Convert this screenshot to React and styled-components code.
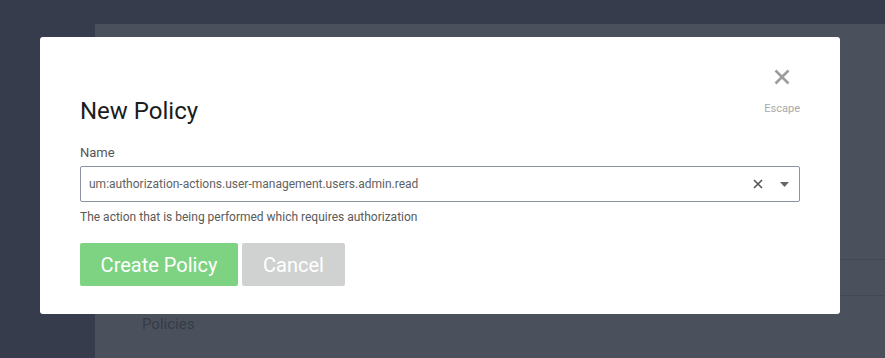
import React from "react";
import styled, { createGlobalStyle } from "styled-components";

const Global = createGlobalStyle`
  html, body { margin: 0; padding: 0; }
  body {
    background: #363c4c;
    font-family: Roboto, "Liberation Sans", sans-serif;
    width: 885px;
    height: 358px;
    overflow: hidden;
  }
`;

const Page = styled.div`
  position: relative;
  width: 885px;
  height: 358px;
  display: grid;
  grid-template-columns: 95px 1fr;
  grid-template-rows: 24px 1fr;
`;

const Content = styled.div`
  grid-column: 2;
  grid-row: 2;
  background: #4b515c;
  display: flex;
  flex-direction: column;
  padding-top: 235px;
`;

const DottedRow = styled.div`
  height: ${(p) => (p.$h != null ? p.$h : 35)}px;
  border-top: 1px dotted #3c424d;
`;

const NavLabel = styled.div`
  padding: 19px 0 0 47px;
  font-size: 15px;
  line-height: 18px;
  color: #353b47;
`;

const Modal = styled.div`
  position: absolute;
  left: 40px;
  top: 37px;
  width: 800px;
  height: 277px;
  box-sizing: border-box;
  background: #fff;
  border-radius: 3px;
  padding: 29px 40px 0 40px;
`;

const Header = styled.div`
  display: flex;
  justify-content: space-between;
  align-items: flex-start;
`;

const Title = styled.h2`
  margin: 30px 0 0 0;
  font-size: 24px;
  font-weight: 400;
  color: #1c1c1c;
  line-height: 30px;
`;

const Close = styled.button`
  display: flex;
  flex-direction: column;
  align-items: center;
  background: none;
  border: none;
  padding: 0;
  margin-top: 3px;
  cursor: pointer;
  color: #9d9d9d;
  font-family: inherit;
`;

const Escape = styled.span`
  margin-top: 17px;
  font-size: 11px;
  color: #a8a8a8;
`;

const Label = styled.div`
  margin-top: 19px;
  font-size: 13px;
  color: #555;
  line-height: 16px;
`;

const Field = styled.div`
  margin-top: 5px;
  height: 36px;
  box-sizing: border-box;
  border: 1px solid #8d92a4;
  border-radius: 2px;
  display: flex;
  align-items: center;
  padding: 0 10px 0 8px;
`;

const Value = styled.div`
  flex: 1;
  font-size: 12px;
  color: #626262;
`;

const IconBtn = styled.span`
  display: flex;
  align-items: center;
  justify-content: center;
  color: ${(p) => p.$color || "#666"};
  margin-left: ${(p) => p.$ml || 0}px;
`;

const Help = styled.div`
  margin-top: 7px;
  font-size: 12px;
  color: #5a5a5a;
  line-height: 16px;
`;

const Actions = styled.div`
  margin-top: 18px;
  display: flex;
  gap: 4px;
`;

const Button = styled.button`
  height: 43px;
  width: ${(p) => p.$w}px;
  border: none;
  border-radius: 2px;
  background: ${(p) => p.$bg};
  color: #fff;
  font-family: inherit;
  font-size: 20px;
  padding: 0;
  cursor: pointer;
`;

export default function App() {
  return (
    <>
      <Global />
      <Page>
        <Content>
          <DottedRow />
          <DottedRow $h={0} />
          <NavLabel>Policies</NavLabel>
        </Content>
        <Modal>
          <Header>
            <Title>New Policy</Title>
            <Close>
              <svg width="16" height="16" viewBox="0 0 16 16">
                <path d="M1.5 1.5L14.5 14.5M14.5 1.5L1.5 14.5" stroke="currentColor" strokeWidth="2.6" />
              </svg>
              <Escape>Escape</Escape>
            </Close>
          </Header>
          <Label>Name</Label>
          <Field>
            <Value>um:authorization-actions.user-management.users.admin.read</Value>
            <IconBtn $color="#555">
              <svg width="10" height="10" viewBox="0 0 10 10">
                <path d="M1 1L9 9M9 1L1 9" stroke="currentColor" strokeWidth="1.6" />
              </svg>
            </IconBtn>
            <IconBtn $color="#666" $ml={17}>
              <svg width="9" height="5" viewBox="0 0 9 5">
                <path d="M0 0H9L4.5 5Z" fill="currentColor" />
              </svg>
            </IconBtn>
          </Field>
          <Help>The action that is being performed which requires authorization</Help>
          <Actions>
            <Button $bg="#7dd382" $w={158}>Create Policy</Button>
            <Button $bg="#d0d1d1" $w={103}>Cancel</Button>
          </Actions>
        </Modal>
      </Page>
    </>
  );
}
